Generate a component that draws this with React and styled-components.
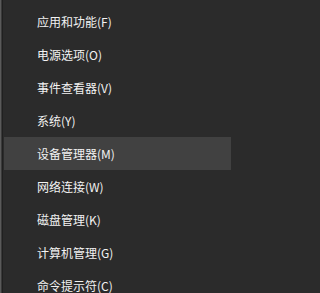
import React from "react";
import styled, { createGlobalStyle } from "styled-components";

const Global = createGlobalStyle`
  html, body { margin: 0; padding: 0; background: #2b2b2b; }
  #root { min-height: 293px; }
`;

const Menu = styled.div`
  box-sizing: border-box;
  width: 231px;
  height: 293px;
  background: #2b2b2b;
  border-left: 1px solid #5a5a5a;
  box-shadow: inset 1px 0 0 #3a3a3a, inset 2px 0 0 #202020;
  padding: 5px 0 0 3px;
  overflow: hidden;
  font-family: "Segoe UI", "Noto Sans CJK SC", "Noto Sans", sans-serif;
  font-size: 12px;
  color: #f2f2f2;
`;

const Item = styled.div`
  height: 33px;
  display: flex;
  align-items: center;
  padding-left: 33px;
  background: ${(p) => (p.$active ? "#414141" : "transparent")};
  line-height: 1;
  white-space: nowrap;
`;

const items = [
  "应用和功能(F)",
  "电源选项(O)",
  "事件查看器(V)",
  "系统(Y)",
  "设备管理器(M)",
  "网络连接(W)",
  "磁盘管理(K)",
  "计算机管理(G)",
  "命令提示符(C)",
];

export default function App() {
  return (
    <>
      <Global />
      <Menu>
        {items.map((t, i) => (
          <Item key={t} $active={i === 4}>
            {t}
          </Item>
        ))}
      </Menu>
    </>
  );
}
